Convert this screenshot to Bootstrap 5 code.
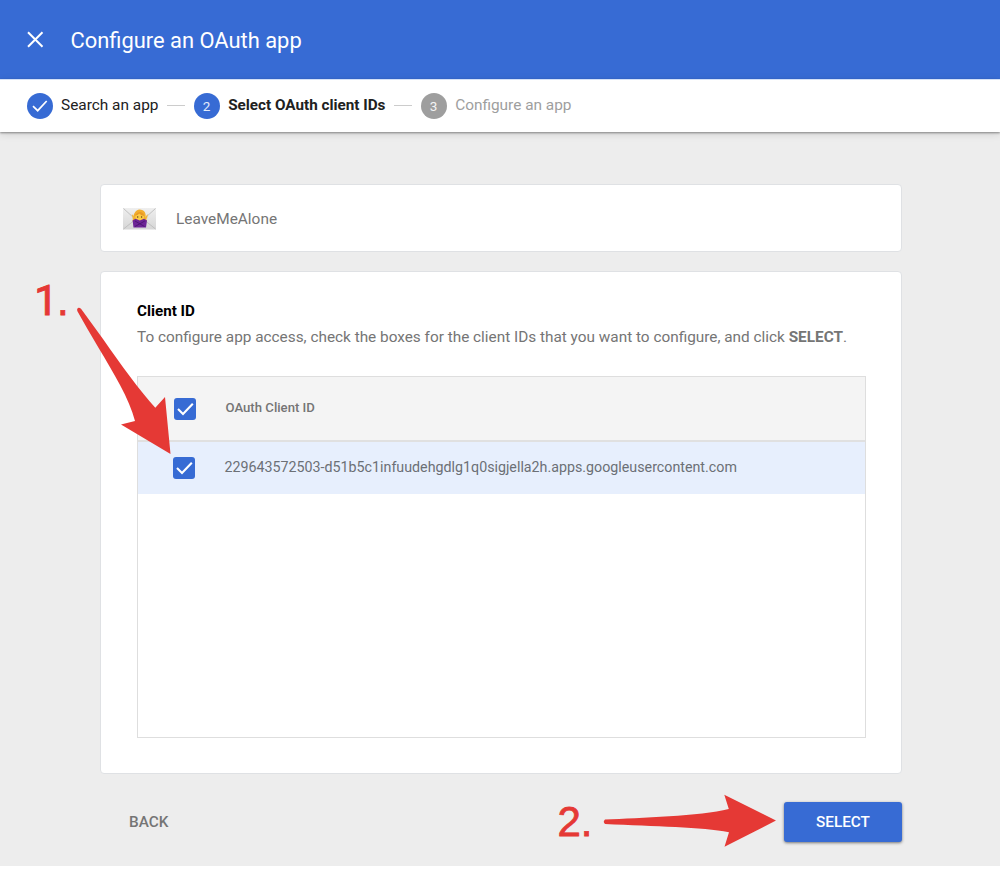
<!DOCTYPE html>
<html lang="en">
<head>
<meta charset="utf-8">
<meta name="viewport" content="width=device-width, initial-scale=1">
<title>Configure an OAuth app</title>
<link rel="stylesheet" href="https://cdn.jsdelivr.net/npm/bootstrap@5.3.0/dist/css/bootstrap.min.css">
<style>
  :root { --blue: #376bd4; --gray: #757575; }
  body { font-family: Roboto, sans-serif; background: #fff; color: var(--gray); overflow: hidden; }
  svg { display: block; flex: none; }
  .page { height: 866px; background: #ededed; }
  .topbar { height: 79px; background: var(--blue); padding-left: 27px; }
  .topbar h1 { font-size: 21.9px; font-weight: 400; line-height: 30px; margin: 2px 0 0 26.5px; }
  .steps { height: 53px; padding: 0 0 1px 26.5px; font-size: 15.4px; line-height: 24px; color: #212121; background: #fff; box-shadow: 0 1px 2px rgba(0,0,0,.4), 0 2px 8px rgba(0,0,0,.12); border-top: 1px solid #d3e0f7; }
  .step { gap: 8.5px; }
  .step-label { margin-top: -1px; }
  .step-now { font-weight: 700; font-size: 15.25px; }
  .step-next { color: #9e9e9e; }
  .dot { width: 26px; height: 26px; border-radius: 50%; background: var(--blue); color: #e4ecfb; font-size: 13.5px; flex: none; }
  .step-next .dot { background: #9e9e9e; color: #f3f3f3; }
  .dash { width: 18px; height: 1px; background: #ccc; flex: none; margin: 0 8.6px; }
  .main-col { width: 802px; margin-left: 100px; padding-top: 52px; }
  .panel { background: #fff; border: 1px solid #dfe1e4; border-radius: 4px; }
  .app-row { height: 68px; padding: 2px 0 0 21.5px; gap: 20.5px; font-size: 15.4px; }
  .app-label { margin-top: 1px; }
  .client { height: 503px; margin-top: 19px; padding: 26px 35px 35px 36px; }
  .client h2 { font-size: 15.2px; font-weight: 700; color: #000; line-height: 26px; margin: 0; }
  .client p { font-size: 15.35px; line-height: 26px; margin: 0 0 26px; white-space: nowrap; }
  .grid-box { height: 362px; border: 1px solid #dedede; }
  .grid-head { height: 65px; background: #f4f4f4; border-bottom: 2px solid #e0e0e0; padding-left: 36px; gap: 29.5px; font-size: 13.15px; font-weight: 500; }
  .grid-row { height: 52px; background: #e7effd; padding-left: 35px; gap: 29.5px; font-size: 14.25px; color: #6c7076; }
  .grid-head .grid-label { margin-top: -2px; }
  .tick { width: 22px; height: 22px; border-radius: 3px; background: var(--blue); flex: none; }
  .actions { height: 40px; margin-top: 28px; padding-left: 29px; font-size: 15.3px; font-weight: 500; }
  .select { width: 118px; height: 40px; padding: 0; border: 0; border-radius: 3px; background: var(--blue); color: #fff; font: inherit; box-shadow: 0 1px 3px rgba(0,0,0,.5); }
  .notes { top: 0; left: 0; pointer-events: none; font: 42px "Liberation Sans", sans-serif; }
</style>
</head>
<body>
<div class="page position-relative">
  <header class="topbar d-flex align-items-center text-white">
    <svg width="17" height="17" viewBox="0 0 17 17" fill="none" stroke="#fff" stroke-width="2"><path d="M1 1.2 15.5 15.7M15.5 1.2 1 15.7"/></svg>
    <h1>Configure an OAuth app</h1>
  </header>
  <nav class="steps d-flex align-items-center">
    <div class="step d-flex align-items-center">
      <span class="dot"><svg width="26" height="26" viewBox="0 0 26 26" fill="none" stroke="#fff" stroke-width="1.7"><path d="M6 13.2 10.7 17.7 19.7 8"/></svg></span>
      <span class="step-label">Search an app</span>
    </div>
    <span class="dash"></span>
    <div class="step step-now d-flex align-items-center">
      <span class="dot d-flex align-items-center justify-content-center fw-normal">2</span>
      <span class="step-label">Select OAuth client IDs</span>
    </div>
    <span class="dash"></span>
    <div class="step step-next d-flex align-items-center">
      <span class="dot d-flex align-items-center justify-content-center">3</span>
      <span class="step-label">Configure an app</span>
    </div>
  </nav>

  <main class="main-col">
    <section class="panel app-row d-flex align-items-center">
      <svg width="33" height="22" viewBox="0 0 33 22">
        <defs><linearGradient id="paper" x1="0" y1="0" x2="0" y2="1"><stop offset="0" stop-color="#efefef"/><stop offset="1" stop-color="#d6d6d6"/></linearGradient></defs>
        <rect width="33" height="21.5" fill="url(#paper)"/>
        <path d="M.5.5 16.5 15 32.5.5M.5 21 13 11M32.5 21 20 11" fill="none" stroke="#bcbcbc" stroke-width=".9"/>
        <path d="M9.5 13C10.5 10 10 3 16 1.6 22 1.5 23 6 22.6 9L24 13 20 14H12Z" fill="#f2ae2e"/>
        <path d="M12 9.5 8.8 6 9.8 11ZM21.8 9.5 24.8 6 24 11Z" fill="#f2b73a"/>
        <ellipse cx="16.6" cy="9" rx="4.4" ry="4.6" fill="#fbcb45"/>
        <path d="M11.8 7.5Q14 3.5 18 4 21 5 21.3 8 18 7.7 16.2 5.6 14.5 7.8 11.8 7.5Z" fill="#e99a25"/>
        <circle cx="14.7" cy="9" r=".7" fill="#5e3a16"/><circle cx="18.6" cy="9" r=".7" fill="#5e3a16"/>
        <path d="M9.6 12.5 12.5 10.8 16.8 12.6 21 10.8 24 12.5 23 19.6H10.5Z" fill="#6d2597"/>
        <path d="M12 13 21.5 18.5M21.8 13 12 18.5" stroke="#4b146f" stroke-width=".9"/>
      </svg>
      <span class="app-label">LeaveMeAlone</span>
    </section>
    <section class="panel client">
      <h2>Client ID</h2>
      <p>To configure app access, check the boxes for the client IDs that you want to configure, and click <b>SELECT</b>.</p>
      <div class="grid-box">
        <div class="grid-head d-flex align-items-center">
          <span class="tick"><svg width="22" height="22" viewBox="0 0 22 22" fill="none" stroke="#fff" stroke-width="2.1"><path d="M4 11 9 16 18.8 5.8"/></svg></span>
          <span class="grid-label">OAuth Client ID</span>
        </div>
        <div class="grid-row d-flex align-items-center">
          <span class="tick"><svg width="22" height="22" viewBox="0 0 22 22" fill="none" stroke="#fff" stroke-width="2.1"><path d="M4 11 9 16 18.8 5.8"/></svg></span>
          <span class="grid-label">229643572503-d51b5c1infuudehgdlg1q0sigjella2h.apps.googleusercontent.com</span>
        </div>
      </div>
    </section>
    <div class="actions d-flex align-items-center justify-content-between">
      <span>BACK</span>
      <button class="select" type="button">SELECT</button>
    </div>
  </main>

  <!-- Red step annotations floating over the dialog -->
  <svg class="notes position-absolute" width="1000" height="866" viewBox="0 0 1000 866" fill="#e53935" stroke="#e53935" stroke-width="0">
    <text y="315" stroke-width=".8"><tspan x="34.2" font-family="Roboto" stroke-width="1">1</tspan><tspan x="56.9">.</tspan></text>
    <text x="557.5" y="836" stroke-width=".8">2.</text>
    <path d="M77.3 311C90 334 107 361 120 385 127 398 132 410 135 421L121 424.5 170.5 454 165 397 155.3 407.7C140 391 121 365 103 339L81.2 309Q78.5 306.5 77.1 309.2Z"/>
    <path d="M605 819.5C640 818 700 816 728.8 809L724.3 794.8 776 820.5 724.5 846.8 729 832.3C702 827 655 826.5 605 824Q602.5 821.8 605 819.5Z"/>
  </svg>
</div>
<script src="https://cdn.jsdelivr.net/npm/bootstrap@5.3.0/dist/js/bootstrap.bundle.min.js"></script>
</body>
</html>
